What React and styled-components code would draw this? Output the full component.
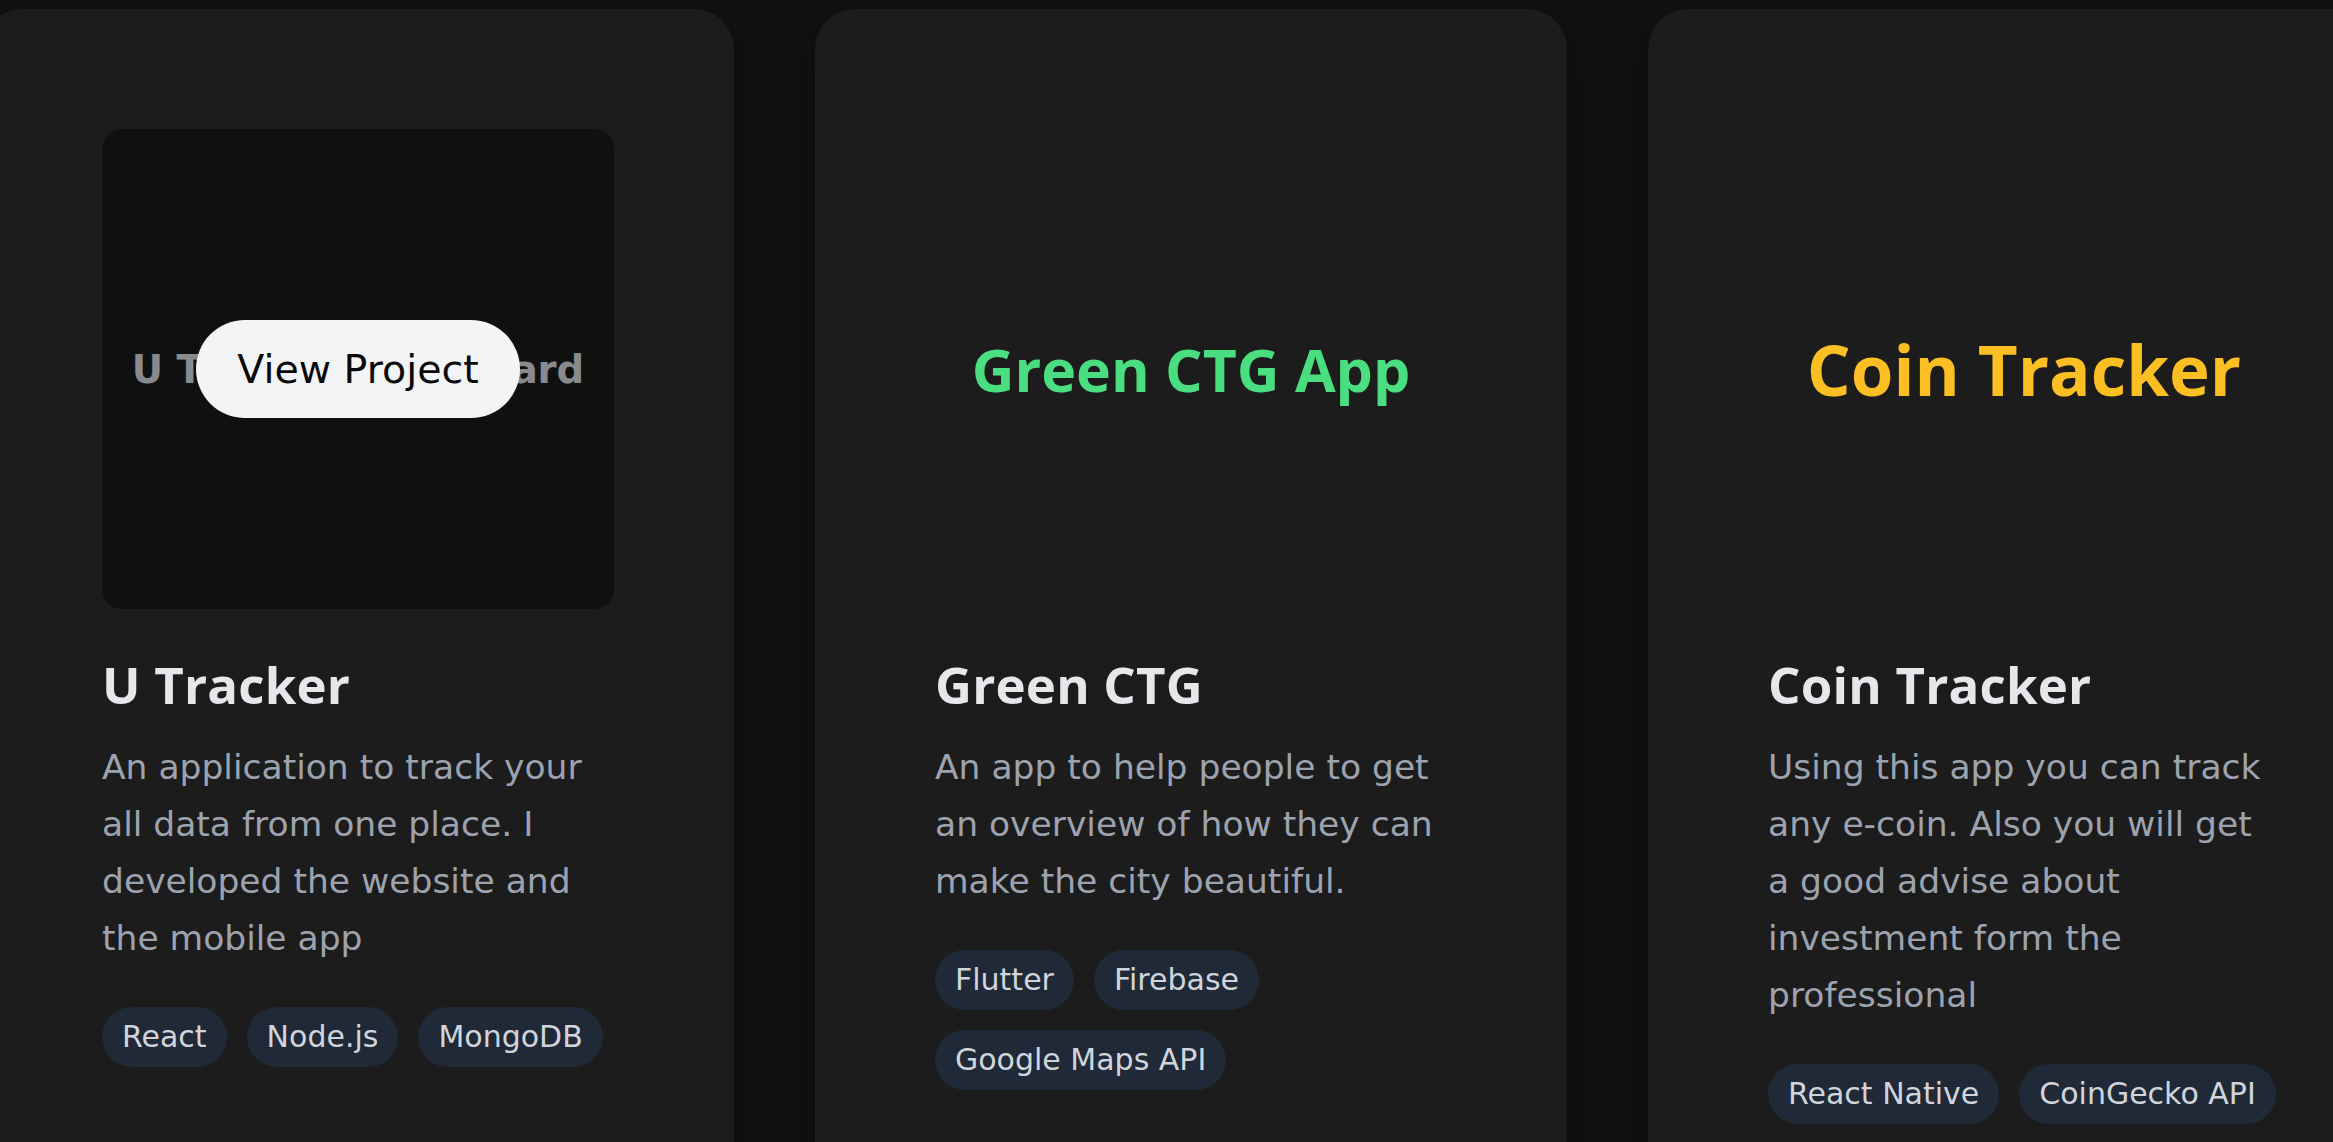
import React from 'react';
import styled, { createGlobalStyle } from 'styled-components';

const GlobalStyle = createGlobalStyle`
  html, body {
    margin: 0;
    padding: 0;
    background: #111111;
    overflow: hidden;
  }
  * {
    box-sizing: border-box;
  }
`;

const Page = styled.main`
  width: 100vw;
  height: 100vh;
  overflow: hidden;
  padding-top: 9px;
  font-family: "DejaVu Sans", "Open Sans", sans-serif;
`;

const Track = styled.div`
  display: flex;
  gap: 81px;
  margin-left: -18px;
`;

const Card = styled.article`
  flex: 0 0 752px;
  background: #1c1c1c;
  border-radius: 40px;
  padding: 120px;
  box-shadow: 0 10px 30px rgba(0, 0, 0, 0.35);
`;

const Preview = styled.div`
  position: relative;
  height: 480px;
  border-radius: 20px;
  overflow: hidden;
  display: flex;
  align-items: center;
  justify-content: center;
  margin-bottom: 40px;
`;

const PreviewLabel = styled.span`
  font-family: ${(p) => p.$font};
  font-size: ${(p) => p.$size}px;
  font-weight: 700;
  color: ${(p) => p.$color};
  white-space: nowrap;
`;

const Overlay = styled.div`
  position: absolute;
  inset: 0;
  background: rgba(0, 0, 0, 0.4);
  display: flex;
  align-items: center;
  justify-content: center;
`;

const ViewButton = styled.button`
  border: none;
  background: #f3f4f6;
  color: #0a0a0a;
  font-family: "DejaVu Sans", sans-serif;
  font-size: 39.5px;
  line-height: 58px;
  padding: 20px 41px;
  border-radius: 9999px;
  cursor: pointer;
`;

const Title = styled.h3`
  margin: 0 0 20px;
  font-family: "Open Sans", sans-serif;
  font-size: 51px;
  line-height: 70px;
  font-weight: 700;
  color: #e5e7eb;
  letter-spacing: 0.2px;
`;

const Description = styled.p`
  margin: 0 0 40px;
  font-size: 34.5px;
  line-height: 57px;
  color: #9ca3af;
`;

const Tags = styled.div`
  display: flex;
  flex-wrap: wrap;
  gap: 20px;
`;

const Tag = styled.span`
  background: #1f2937;
  color: #d1d5db;
  font-size: 30px;
  line-height: 40px;
  padding: 10px 20px;
  border-radius: 9999px;
`;

const projects = [
  {
    title: 'U Tracker',
    label: 'U Tracker Dashboard',
    labelColor: '#e5e7eb',
    labelSize: 38.5,
    labelFont: '"DejaVu Sans", sans-serif',
    hovered: true,
    description:
      'An application to track your all data from one place. I developed the website and the mobile app',
    tags: ['React', 'Node.js', 'MongoDB'],
  },
  {
    title: 'Green CTG',
    label: 'Green CTG App',
    labelColor: '#4ade80',
    labelSize: 59,
    labelFont: '"Open Sans", sans-serif',
    description:
      'An app to help people to get an overview of how they can make the city beautiful.',
    tags: ['Flutter', 'Firebase', 'Google Maps API'],
  },
  {
    title: 'Coin Tracker',
    label: 'Coin Tracker',
    labelColor: '#fbbf24',
    labelSize: 69,
    labelFont: '"Open Sans", sans-serif',
    description:
      'Using this app you can track any e-coin. Also you will get a good advise about investment form the professional',
    tags: ['React Native', 'CoinGecko API'],
  },
];

const ProjectCard = ({ project }) => (
  <Card>
    <Preview>
      <PreviewLabel
        $font={project.labelFont}
        $size={project.labelSize}
        $color={project.labelColor}
      >
        {project.label}
      </PreviewLabel>
      {project.hovered && (
        <Overlay>
          <ViewButton>View Project</ViewButton>
        </Overlay>
      )}
    </Preview>
    <Title>{project.title}</Title>
    <Description>{project.description}</Description>
    <Tags>
      {project.tags.map((t) => (
        <Tag key={t}>{t}</Tag>
      ))}
    </Tags>
  </Card>
);

export default function App() {
  return (
    <>
      <GlobalStyle />
      <Page>
        <Track>
          {projects.map((p) => (
            <ProjectCard key={p.title} project={p} />
          ))}
        </Track>
      </Page>
    </>
  );
}
